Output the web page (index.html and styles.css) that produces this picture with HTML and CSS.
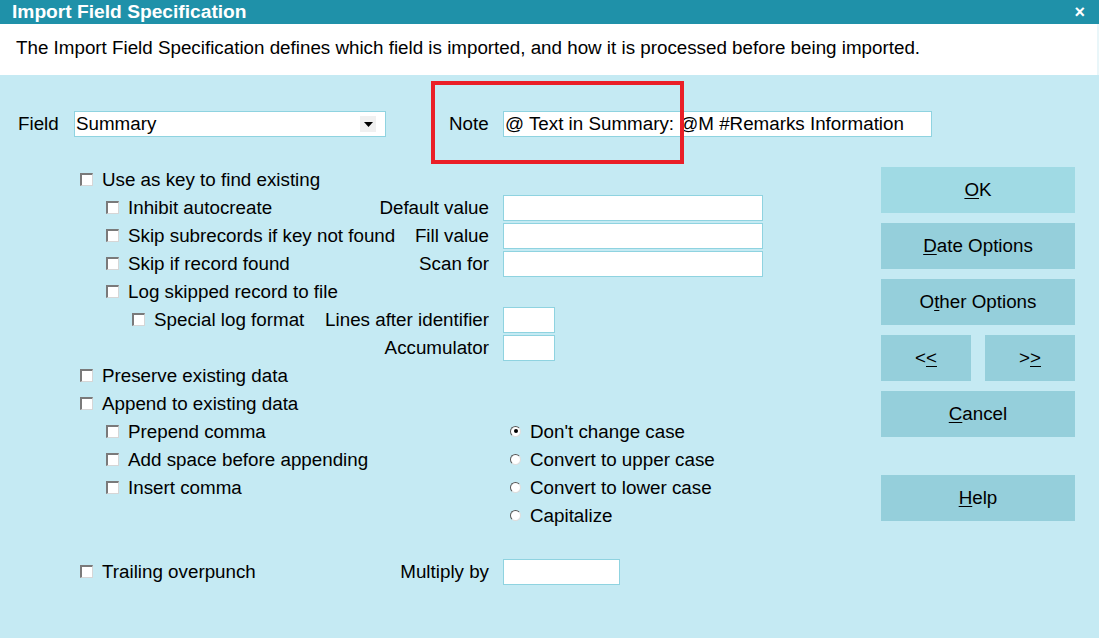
FILE: index.html
```html
<!DOCTYPE html>
<html>
<head>
<meta charset="utf-8">
<link rel="stylesheet" href="styles.css">
</head>
<body>
<div class="dialog">
  <div class="titlebar">
    <span class="title">Import Field Specification</span>
    <span class="close">×</span>
  </div>
  <div class="desc">The Import Field Specification defines which field is imported, and how it is processed before being imported.</div>
  <div class="toprow">
    <span class="flabel">Field</span>
    <div class="select"><span>Summary</span><span class="arrow"><svg width="9" height="5" viewBox="0 0 9 5"><path d="M0 0h9L4.5 5z" fill="#000"/></svg></span></div>
    <span class="nlabel">Note</span>
    <div class="input note">@ Text in Summary: @M #Remarks Information</div>
    <div class="highlight"></div>
  </div>
  <div class="main">
    <div class="form">
      <div class="rows">
        <div class="row"><div class="left l1"><span class="cb"></span>Use as key to find existing</div></div>
        <div class="row"><div class="left l2"><span class="cb"></span>Inhibit autocreate</div><span class="lbl">Default value</span><div class="ctl"><div class="input wide"></div></div></div>
        <div class="row"><div class="left l2"><span class="cb"></span>Skip subrecords if key not found</div><span class="lbl">Fill value</span><div class="ctl"><div class="input wide"></div></div></div>
        <div class="row"><div class="left l2"><span class="cb"></span>Skip if record found</div><span class="lbl">Scan for</span><div class="ctl"><div class="input wide"></div></div></div>
        <div class="row"><div class="left l2"><span class="cb"></span>Log skipped record to file</div></div>
        <div class="row"><div class="left l3"><span class="cb"></span>Special log format</div><span class="lbl">Lines after identifier</span><div class="ctl"><div class="input small"></div></div></div>
        <div class="row"><div class="left"></div><span class="lbl">Accumulator</span><div class="ctl"><div class="input small"></div></div></div>
        <div class="row"><div class="left l1"><span class="cb"></span>Preserve existing data</div></div>
        <div class="row"><div class="left l1"><span class="cb"></span>Append to existing data</div></div>
        <div class="row"><div class="left l2"><span class="cb"></span>Prepend comma</div><div class="ctl radio"><span class="rb on"></span>Don't change case</div></div>
        <div class="row"><div class="left l2"><span class="cb"></span>Add space before appending</div><div class="ctl radio"><span class="rb"></span>Convert to upper case</div></div>
        <div class="row"><div class="left l2"><span class="cb"></span>Insert comma</div><div class="ctl radio"><span class="rb"></span>Convert to lower case</div></div>
        <div class="row"><div class="left"></div><div class="ctl radio"><span class="rb"></span>Capitalize</div></div>
        <div class="row"></div>
        <div class="row"><div class="left l1"><span class="cb"></span>Trailing overpunch</div><span class="lbl">Multiply by</span><div class="ctl"><div class="input mult"></div></div></div>
      </div>
    </div>
    <div class="buttons">
      <div class="btn light"><span><u>O</u>K</span></div>
      <div class="btn"><span><u>D</u>ate Options</span></div>
      <div class="btn"><span>O<u>t</u>her Options</span></div>
      <div class="btnpair">
        <div class="btn half"><span>&lt;<u>&lt;</u></span></div>
        <div class="btn half"><span>&gt;<u>&gt;</u></span></div>
      </div>
      <div class="btn"><span><u>C</u>ancel</span></div>
      <div class="btn help"><span><u>H</u>elp</span></div>
    </div>
  </div>
</div>
</body>
</html>
```
FILE: styles.css
```css
* { box-sizing: border-box; }
html, body { margin: 0; padding: 0; }
body {
  width: 1099px;
  height: 638px;
  overflow: hidden;
  font-family: "Liberation Sans", Arial, sans-serif;
  font-size: 18.8px;
  color: #000;
  background: #c5eaf3;
}
.dialog { width: 1099px; height: 638px; display: flex; flex-direction: column; }
.titlebar {
  height: 24px;
  flex: none;
  background: #1f91a9;
  color: #fff;
  display: flex;
  align-items: center;
  justify-content: space-between;
  padding: 0 12px 0 12px;
}
.title { font-weight: bold; font-size: 19.2px; line-height: 24px; }
.close { font-weight: bold; font-size: 18px; line-height: 22px; margin-right: 2px; }
.desc {
  height: 51px;
  flex: none;
  background: #fff;
  padding-left: 16px;
  line-height: 48px;
  white-space: nowrap;
  border-right: 2px solid #e9f6f9;
}
.toprow { display: flex; align-items: center; height: 26px; margin-top: 36px; position: relative; flex: none; }
.toprow > * { flex: none; }
.flabel { margin-left: 18px; width: 56px; }
.select {
  width: 312px; height: 26px; background: #fff;
  border: 1px solid #8fd3e0;
  display: flex; align-items: center; justify-content: space-between;
  padding-left: 1px; padding-right: 9px;
}
.arrow {
  width: 16px; height: 16px; background: #f0f0f0;
  display: flex; align-items: center; justify-content: center;
}
.nlabel { margin-left: 63px; width: 54px; }
.input { background: #fff; border: 1px solid #8fd3e0; height: 26px; }
.note { width: 429px; padding-left: 1px; line-height: 24px; white-space: nowrap; overflow: hidden; }
.highlight {
  position: absolute;
  left: 431px; top: -30px;
  width: 253px; height: 83px;
  border: 4px solid #ea1f27;
}
.main { flex: 1; display: flex; }
.form { width: 881px; }
.rows { margin-top: 29px; margin-left: 80px; width: 683px; }
.row { height: 28px; display: flex; align-items: center; }
.left { flex: 1; display: flex; align-items: center; white-space: nowrap; }
.l2 { padding-left: 26px; }
.l3 { padding-left: 52px; }
.cb {
  width: 13px; height: 13px; margin-right: 9px; flex: none;
  background: #fff;
  border-top: 2px solid #7a7a7a; border-left: 2px solid #7a7a7a;
  border-right: 1px solid #d6d6d6; border-bottom: 1px solid #d6d6d6;
  position: relative; top: -1px;
}
.lbl { margin-right: 14px; white-space: nowrap; }
.ctl { width: 260px; flex: none; display: flex; align-items: center; }
.wide { width: 260px; }
.small { width: 52px; }
.mult { width: 117px; }
.radio { white-space: nowrap; padding-left: 7px; }
.rb {
  width: 11px; height: 11px; border-radius: 50%; background: #fff; flex: none;
  border-top: 1.5px solid #555; border-left: 1.5px solid #555;
  border-right: 1px solid #ddd; border-bottom: 1px solid #ddd;
  margin-right: 9px; position: relative; top: -1px;
  display: flex; align-items: center; justify-content: center;
}
.rb.on::after { content: ""; width: 4px; height: 4px; border-radius: 50%; background: #000; }
.buttons { width: 194px; flex: none; padding-top: 30px; display: flex; flex-direction: column; gap: 10px; }
.btn {
  height: 46px; background: #95cfdb; flex: none;
  display: flex; align-items: center; justify-content: center;
}
.btn.light { background: #a0dae4; }
.btnpair { display: flex; justify-content: space-between; }
.btn.half { width: 90px; }
.btn.help { margin-top: 28px; }
u { text-decoration-thickness: 1px; text-underline-offset: 2px; }
```
